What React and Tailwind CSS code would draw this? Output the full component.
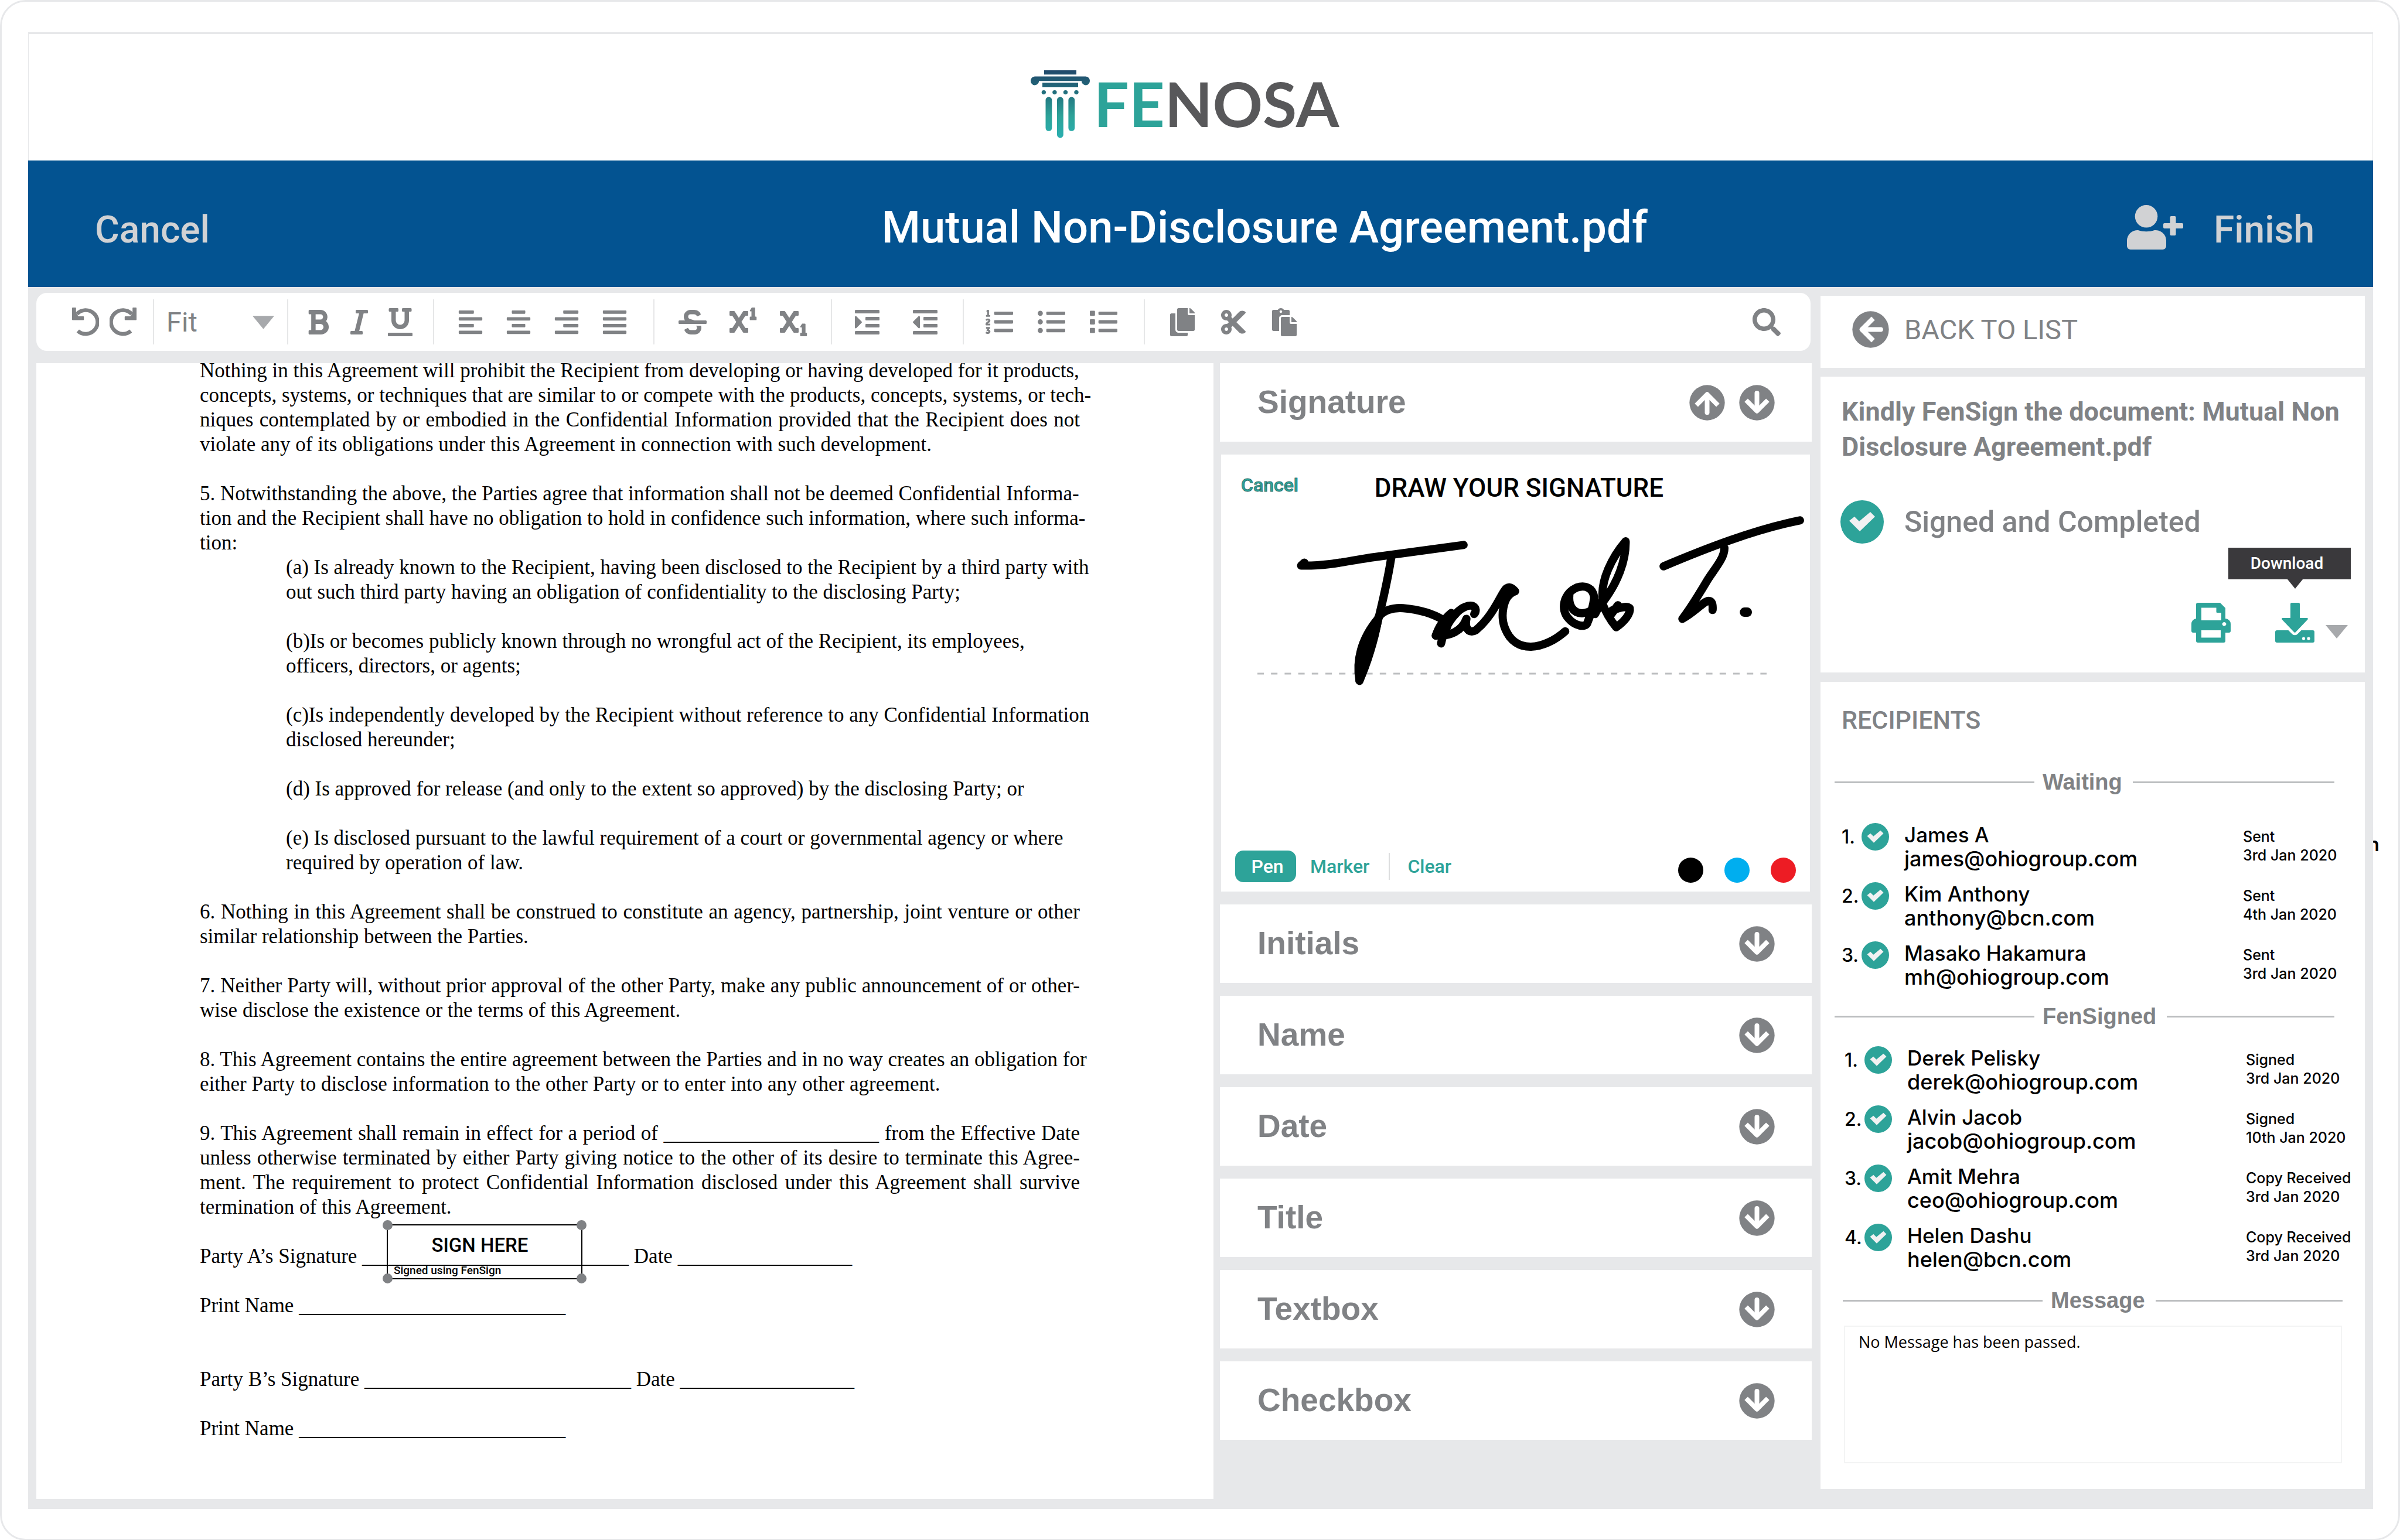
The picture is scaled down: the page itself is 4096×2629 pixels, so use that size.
import React from "react";
import {
  FaBold, FaItalic, FaUnderline, FaAlignLeft, FaAlignCenter, FaAlignRight, FaAlignJustify,
  FaStrikethrough, FaIndent, FaOutdent, FaListOl, FaListUl, FaList, FaCopy, FaCut, FaPaste, FaSearch,
} from "react-icons/fa";

/* ---------- icons ---------- */

function Logo() {
  return (
    <svg viewBox="0 0 101 116" className="h-[116px] w-[101px]" aria-hidden="true">
      <defs>
        <linearGradient id="pillar" x1="0" y1="0" x2="0" y2="116" gradientUnits="userSpaceOnUse">
          <stop offset="0" stopColor="#21496b" />
          <stop offset="0.35" stopColor="#22737f" />
          <stop offset="0.68" stopColor="#2da399" />
          <stop offset="1" stopColor="#2aafb0" />
        </linearGradient>
      </defs>
      <g fill="url(#pillar)">
        <path d="M23 0h55v7.2H23zM20 21.2h61v7.8H20z" />
        <path d="M7 10.4H94a7.3 7.5 0 0 1 7 7.6a7.1 7.3 0 0 1-14.2 0.2H14.2A7.1 7.3 0 0 1 0 18A7.3 7.5 0 0 1 7 10.4z" />
        <circle cx="22.3" cy="37.6" r="3.7" />
        <circle cx="40.9" cy="37.6" r="3.7" />
        <circle cx="59.5" cy="37.6" r="3.7" />
        <circle cx="78" cy="37.6" r="3.7" />
        <rect x="25.5" y="45.4" width="10.8" height="58.4" rx="5.4" />
        <rect x="45" y="45.4" width="10.8" height="70" rx="5.4" />
        <rect x="64.4" y="45.4" width="10.8" height="58.4" rx="5.4" />
      </g>
    </svg>
  );
}

function UserPlus() {
  return (
    <svg viewBox="0 0 96 76" className="h-[76px] w-[96px]" fill="#d1d2d4" aria-hidden="true">
      <circle cx="33" cy="19.3" r="19.3" />
      <path d="M0 60a18 18 0 0 1 19-17c9 3 19 3 28 0a18 18 0 0 1 20 17v10a6 6 0 0 1-6 6H6a6 6 0 0 1-6-6z" />
      <path d="M73.500 21a2 2 0 0 1 2-2h6a2 2 0 0 1 2 2v10h10.500a2 2 0 0 1 2 2v5a2 2 0 0 1-2 2H83.500v10a2 2 0 0 1-2 2h-6a2 2 0 0 1-2-2V40H64a2 2 0 0 1-2-2v-5a2 2 0 0 1 2-2h9.500z" />
    </svg>
  );
}

function UndoIcon() {
  return (
    <svg viewBox="0 0 46 49" className="h-[49px] w-[46px]" aria-hidden="true">
      <path d="M8.300 11A20.300 20.300 0 1 1 9.800 40" fill="none" stroke="currentColor" strokeWidth="6.600" />
      <path d="M0 1a1 1 0 0 1 1-1h4.800a1 1 0 0 1 1 1v8l4 6h8.400a1 1 0 0 1 1 1v4.600a1 1 0 0 1-1 1H1a1 1 0 0 1-1-1z" fill="currentColor" />
    </svg>
  );
}

function RedoIcon() {
  return (
    <svg viewBox="0 0 46 49" className="h-[49px] w-[46px]" aria-hidden="true">
      <g transform="translate(46 0) scale(-1 1)">
        <path d="M8.300 11A20.300 20.300 0 1 1 9.800 40" fill="none" stroke="currentColor" strokeWidth="6.600" />
        <path d="M0 1a1 1 0 0 1 1-1h4.800a1 1 0 0 1 1 1v8l4 6h8.400a1 1 0 0 1 1 1v4.600a1 1 0 0 1-1 1H1a1 1 0 0 1-1-1z" fill="currentColor" />
      </g>
    </svg>
  );
}

function ScriptIcon({ low }) {
  return (
    <svg viewBox="0 0 47 49" className="h-[49px] w-[47px]" fill="currentColor" aria-hidden="true">
      <path d="M6 9L26 40M26 9L6 40" stroke="currentColor" strokeWidth="7.500" />
      <rect x="0" y="6" width="9" height="8" rx="1.200" />
      <rect x="23" y="6" width="9" height="8" rx="1.200" />
      <rect x="0" y="35" width="9" height="8" rx="1.200" />
      <rect x="23" y="35" width="9" height="8" rx="1.200" />
      <g transform={low ? "translate(0 27.400)" : undefined}>
        <path d="M38 0h4.500a1.200 1.200 0 0 1 1.200 1.200V15.500H45a1.200 1.200 0 0 1 1.200 1.200v3.700a1.200 1.200 0 0 1-1.200 1.200h-9.200a1.200 1.200 0 0 1-1.200-1.200v-3.700a1.200 1.200 0 0 1 1.200-1.200h1.700V6.500H36a1.200 1.200 0 0 1-1.200-1.600z" />
      </g>
    </svg>
  );
}

function Caret({ className }) {
  return (
    <svg viewBox="0 0 38 23" className={className} fill="#a7a9ac" aria-hidden="true">
      <path d="M0 0h38L19 23z" />
    </svg>
  );
}

function ArrowCircle({ dir = "down", className = "h-[61px] w-[61px]" }) {
  const turn = { down: 0, left: 90, up: 180 }[dir];
  return (
    <svg viewBox="0 0 88 88" className={className} aria-hidden="true">
      <circle cx="44" cy="44" r="43.500" fill="#808285" />
      <g transform={`rotate(${turn} 44 44)`} fill="none" stroke="#fff" strokeWidth="11.500" strokeLinejoin="round">
        <path d="M44 20V62" strokeLinecap="round" />
        <path d="M21.500 42L44 64.500L66.500 42" strokeLinecap="square" />
      </g>
    </svg>
  );
}

function CheckCircle({ className }) {
  return (
    <svg viewBox="-37 -37 74 74" className={className} aria-hidden="true">
      <circle r="37" fill="#2da399" />
      <path d="M-22-2L-13-9L-5-1L14-17L22-9L-4 16z" fill="#f1f1f2" />
    </svg>
  );
}

function PrintIcon() {
  return (
    <svg viewBox="0 0 67 68" className="h-[68px] w-[67px]" aria-hidden="true">
      <path
        fill="#2da399"
        fillRule="evenodd"
        d="M11 0H49L58 9V27a9 9 0 0 1 9 9v12a3 3 0 0 1-3 3H58V65a3 3 0 0 1-3 3H11a3 3 0 0 1-3-3V51H3a3 3 0 0 1-3-3V36a9 9 0 0 1 8-9V3a3 3 0 0 1 3-3zM17 8.500V30H51V17H44a1.500 1.500 0 0 1-1.500-1.500V8.500zM17 47V59.500H50V47zM56 33a3.400 3.400 0 1 0 .01 0z"
      />
    </svg>
  );
}

function DownloadIcon() {
  return (
    <svg viewBox="0 0 67 68" className="h-[68px] w-[67px]" fill="#2da399" aria-hidden="true">
      <path d="M28 0H40a2 2 0 0 1 2 2V26H54.500a1.500 1.500 0 0 1 1 2.500L35 50a2 2 0 0 1-3 0L11.500 28.500a1.500 1.500 0 0 1 1-2.500H26V2a2 2 0 0 1 2-2z" />
      <path
        fillRule="evenodd"
        d="M3 47H22.500L29 53.500a6.400 6.400 0 0 0 9 0L44.500 47H64a3 3 0 0 1 3 3V65a3 3 0 0 1-3 3H3a3 3 0 0 1-3-3V50a3 3 0 0 1 3-3zM48.500 58.500a2.700 2.700 0 1 0 .01 0zM57 58.500a2.700 2.700 0 1 0 .01 0z"
      />
    </svg>
  );
}

/* ---------- toolbar ---------- */

function Tool({ label, children }) {
  return (
    <button type="button" aria-label={label} className="flex h-[49px] w-[48px] items-center justify-center">
      {children}
    </button>
  );
}

const GROUP = "flex h-[77px] items-center border-l-2 border-[#e6e7e8]";

function Toolbar() {
  return (
    <div role="toolbar" aria-label="Formatting" className="mr-[2px] flex h-[99px] items-center rounded-[18px] bg-white pl-[60px] pr-[51px] text-[#808285]">
      <div className="flex gap-[16px] pr-[27px]">
        <Tool label="Undo"><UndoIcon /></Tool>
        <Tool label="Redo"><RedoIcon /></Tool>
      </div>
      <div className={`${GROUP} w-[229px] pl-[21px]`}>
        <div className="relative w-[184px]">
          <select aria-label="Zoom" className="w-full appearance-none bg-transparent font-['Roboto',sans-serif] text-[47px] leading-[60px]">
            <option>Fit</option>
          </select>
          <Caret className="pointer-events-none absolute top-[19px] right-0 h-[23px] w-[37px]" />
        </div>
      </div>
      <div className={`${GROUP} gap-[22px] pr-[32px] pl-[27px]`}>
        <Tool label="Bold"><FaBold size={48} /></Tool>
        <Tool label="Italic"><FaItalic size={48} /></Tool>
        <Tool label="Underline"><FaUnderline size={48} /></Tool>
      </div>
      <div className={`${GROUP} gap-[34px] pr-[42px] pl-[38px]`}>
        <Tool label="Align left"><FaAlignLeft size={46} /></Tool>
        <Tool label="Align center"><FaAlignCenter size={46} /></Tool>
        <Tool label="Align right"><FaAlignRight size={46} /></Tool>
        <Tool label="Justify"><FaAlignJustify size={46} /></Tool>
      </div>
      <div className={`${GROUP} gap-[38px] pr-[40px] pl-[41px]`}>
        <Tool label="Strikethrough"><FaStrikethrough size={48} /></Tool>
        <Tool label="Superscript"><ScriptIcon /></Tool>
        <Tool label="Subscript"><ScriptIcon low /></Tool>
      </div>
      <div className={`${GROUP} gap-[51px] pr-[40px] pl-[36px]`}>
        <Tool label="Indent"><FaIndent size={48} /></Tool>
        <Tool label="Outdent"><FaOutdent size={48} /></Tool>
      </div>
      <div className={`${GROUP} gap-[41px] pr-[45px] pl-[36px]`}>
        <Tool label="Numbered list"><FaListOl size={47} /></Tool>
        <Tool label="Bulleted list"><FaListUl size={47} /></Tool>
        <Tool label="Square list"><FaList size={47} /></Tool>
      </div>
      <div className={`${GROUP} gap-[39px] pl-[40px]`}>
        <Tool label="Copy"><FaCopy size={48} /></Tool>
        <Tool label="Cut"><FaCut size={48} /></Tool>
        <Tool label="Paste"><FaPaste size={48} /></Tool>
      </div>
      <div className="ml-auto">
        <Tool label="Search"><FaSearch size={48} /></Tool>
      </div>
    </div>
  );
}

/* ---------- document ---------- */

const J = true;
const PARAGRAPHS = [
  { lines: [
    ["Nothing in this Agreement will prohibit the Recipient from developing or having developed for it products,"],
    ["concepts, systems, or techniques that are similar to or compete with the products, concepts, systems, or tech-"],
    ["niques contemplated by or embodied in the Confidential Information provided that the Recipient does not", J],
    ["violate any of its obligations under this Agreement in connection with such development."],
  ], space: true },
  { lines: [
    ["5. Notwithstanding the above, the Parties agree that information shall not be deemed Confidential Informa-"],
    ["tion and the Recipient shall have no obligation to hold in confidence such information, where such informa-"],
    ["tion:"],
  ] },
  { indent: true, lines: [
    ["(a) Is already known to the Recipient, having been disclosed to the Recipient by a third party with"],
    ["out such third party having an obligation of confidentiality to the disclosing Party;"],
  ], space: true },
  { indent: true, lines: [
    ["(b)Is or becomes publicly known through no wrongful act of the Recipient, its employees,"],
    ["officers, directors, or agents;"],
  ], space: true },
  { indent: true, lines: [
    ["(c)Is independently developed by the Recipient without reference to any Confidential Information"],
    ["disclosed hereunder;"],
  ], space: true },
  { indent: true, lines: [["(d) Is approved for release (and only to the extent so approved) by the disclosing Party; or"]], space: true },
  { indent: true, lines: [
    ["(e) Is disclosed pursuant to the lawful requirement of a court or governmental agency or where"],
    ["required by operation of law."],
  ], space: true },
  { lines: [
    ["6. Nothing in this Agreement shall be construed to constitute an agency, partnership, joint venture or other", J],
    ["similar relationship between the Parties."],
  ], space: true },
  { lines: [
    ["7. Neither Party will, without prior approval of the other Party, make any public announcement of or other-", J],
    ["wise disclose the existence or the terms of this Agreement."],
  ], space: true },
  { lines: [
    ["8. This Agreement contains the entire agreement between the Parties and in no way creates an obligation for"],
    ["either Party to disclose information to the other Party or to enter into any other agreement."],
  ], space: true },
  { lines: [
    ["9. This Agreement shall remain in effect for a period of _____________________ from the Effective Date", J],
    ["unless otherwise terminated by either Party giving notice to the other of its desire to terminate this Agree-", J],
    ["ment. The requirement to protect Confidential Information disclosed under this Agreement shall survive", J],
    ["termination of this Agreement."],
  ] },
];

function SignHere() {
  const dot = "absolute h-[17px] w-[17px] rounded-full bg-[#808285]";
  return (
    <button type="button" className="absolute -top-[34px] left-[319px] flex h-[94px] w-[334px] flex-col border-2 border-black text-left font-['Roboto',sans-serif] font-medium">
      <span className="mt-[14px] self-center pr-[16px] text-[33px] leading-[40px]">SIGN HERE</span>
      <span className="mt-[12px] ml-[10px] text-[19px] leading-[22px]">Signed using FenSign</span>
      <span className={`${dot} -top-[9px] -left-[9px]`} />
      <span className={`${dot} -top-[9px] -right-[9px]`} />
      <span className={`${dot} -bottom-[9px] -left-[9px]`} />
      <span className={`${dot} -right-[9px] -bottom-[9px]`} />
    </button>
  );
}

function Document() {
  return (
    <article className="overflow-hidden bg-white">
      <div className="-mt-[8px] ml-[279px] max-w-[1502px] font-['Liberation_Serif',serif] text-[35px] leading-[42px] whitespace-nowrap text-black">
        {PARAGRAPHS.map((p, i) => (
          <p key={i} className={`${p.indent ? "pl-[147px]" : ""} ${p.space ? "mb-[42px]" : ""}`}>
            {p.lines.map(([text, justified]) => (
              <span key={text} className={justified ? "block text-justify whitespace-normal [text-align-last:justify]" : "block"}>
                {text}
              </span>
            ))}
          </p>
        ))}
        <div className="relative mt-[42px]">
          <p>Party A’s Signature __________________________ Date _________________</p>
          <SignHere />
        </div>
        <p className="mt-[42px]">Print Name __________________________</p>
        <p className="mt-[84px]">Party B’s Signature __________________________ Date _________________</p>
        <p className="mt-[42px]">Print Name __________________________</p>
      </div>
    </article>
  );
}

/* ---------- field panels ---------- */

function Panel({ title, up }) {
  return (
    <section className="flex h-[134px] items-center justify-between bg-white pr-[63px] pl-[64px]">
      <h2 className="pb-[2px] font-['Liberation_Sans',sans-serif] text-[55px] leading-[64px] font-bold text-[#808285]">{title}</h2>
      <div className="flex gap-[24px]">
        {up && <button type="button" aria-label={`Collapse ${title}`}><ArrowCircle dir="up" /></button>}
        <button type="button" aria-label={`Expand ${title}`}><ArrowCircle /></button>
      </div>
    </section>
  );
}

function Signature() {
  const line = { vectorEffect: "non-scaling-stroke" };
  return (
    <svg viewBox="0 0 1005 570" className="mt-[12px] w-full" role="img" aria-label="Drawn signature">
      <path d="M62 282H931" stroke="#bcbec0" strokeWidth="3" strokeDasharray="11 12.200" />
      <g transform="translate(-44.600 -283.800) scale(0.6967 0.6271)" fill="none" stroke="#000" strokeWidth="14" strokeLinecap="round" strokeLinejoin="round">
        <path {...line} d="M268 600L260 608C330 610 390 592 440 585C515 573 590 563 658 552" />
        <path {...line} d="M481 585C472 650 460 705 449 755C436 820 420 870 403 922" />
        <path {...line} fill="#000" d="M403 920C395 870 405 810 449 752C440 810 420 880 403 920z" />
        <path {...line} d="M449 750C460 730 485 722 510 724C550 728 585 740 608 756" />
        <path {...line} d="M603 820C610 780 625 755 640 738C655 720 672 715 680 718C690 723 689 733 684 740" />
        <path {...line} fill="#000" d="M590 799C596 778 608 756 628 737L612 794z" />
        <path {...line} d="M590 798C625 802 655 785 665 753C660 780 672 794 688 784C725 750 742 705 756 680C765 662 775 665 784 678" />
        <path {...line} d="M784 678C752 690 748 750 760 780C785 850 855 838 907 787" />
        <path {...line} d="M978 696C976 668 955 660 935 668C902 685 895 728 915 752C930 772 955 778 961 765C972 735 976 715 978 696" />
        <path {...line} d="M917 690C915 715 925 737 948 738C970 736 985 722 1003 700" />
        <path {...line} d="M1055 542C1025 580 990 650 1000 706C1035 655 1056 595 1055 542z" />
        <path {...line} d="M996 706C1006 735 1020 760 1032 776C1050 762 1068 740 1065 724C1055 716 1040 724 1022 730M1036 716L1020 740" />
        <path {...line} d="M980 740L996 706" />
        <path {...line} d="M1148 610C1250 562 1370 510 1482 485" />
        <path {...line} d="M1297 560C1297 590 1270 620 1253 652C1230 695 1210 730 1194 753C1215 740 1228 726 1240 716C1256 700 1270 697 1268 729" />
        <path {...line} strokeWidth="16" d="M1346 735L1353 735" />
      </g>
    </svg>
  );
}

function Ink({ label, className, checked }) {
  return (
    <input type="radio" name="ink" aria-label={label} defaultChecked={checked} className={`h-[43px] w-[43px] appearance-none rounded-full ${className}`} />
  );
}

function DrawPanel() {
  return (
    <section className="mr-[3px] ml-[2px] flex flex-col bg-white pt-[34px] pb-[16px] font-['Roboto',sans-serif]">
      <div className="grid grid-cols-[1fr_auto_1fr] items-center px-[34px]">
        <button type="button" className="justify-self-start pb-[10px] text-[32px] leading-[36px] font-medium text-[#2da399] [-webkit-text-stroke:1px_#33716d]">
          Cancel
        </button>
        <h3 className="pl-[12px] text-[44px] leading-[44px] font-medium text-black">DRAW YOUR SIGNATURE</h3>
      </div>
      <Signature />
      <div className="mt-[14px] flex h-[54px] items-center pr-[24px] pl-[24px] text-[32px] font-medium text-[#2da399]">
        <button type="button" className="h-[54px] w-[104px] rounded-[14px] bg-[#2da399] pl-[6px] text-white">Pen</button>
        <button type="button" className="ml-[24px]">Marker</button>
        <span className="ml-[33px] h-[46px] border-l-2 border-[#dcddde]" />
        <button type="button" className="ml-[30px]">Clear</button>
        <div className="ml-auto flex gap-[36px] pt-[12px]">
          <Ink label="Black" checked className="bg-black" />
          <Ink label="Blue" className="bg-[#00aeef]" />
          <Ink label="Red" className="bg-[#ed1c24]" />
        </div>
      </div>
    </section>
  );
}

/* ---------- side column ---------- */

const WAITING = [
  ["James A", "james@ohiogroup.com", "Sent", "3rd Jan 2020"],
  ["Kim Anthony", "anthony@bcn.com", "Sent", "4th Jan 2020"],
  ["Masako Hakamura", "mh@ohiogroup.com", "Sent", "3rd Jan 2020"],
];
const SIGNED = [
  ["Derek Pelisky", "derek@ohiogroup.com", "Signed", "3rd Jan 2020"],
  ["Alvin Jacob", "jacob@ohiogroup.com", "Signed", "10th Jan 2020"],
  ["Amit Mehra", "ceo@ohiogroup.com", "Copy Received", "3rd Jan 2020"],
  ["Helen Dashu", "helen@bcn.com", "Copy Received", "3rd Jan 2020"],
];

function People({ rows, className }) {
  return (
    <ol className={`flex flex-col gap-[19px] font-['Inter',sans-serif] text-[35px] leading-[41px] font-medium text-black ${className}`}>
      {rows.map(([name, mail, state, date], i) => (
        <li key={mail} className="flex">
          <span className="w-[34px] pt-[3px] text-[32px] whitespace-nowrap">{i + 1}.</span>
          <CheckCircle className="h-[47px] w-[47px]" />
          <span className="ml-[26px] flex flex-col">
            <span>{name}</span>
            <span className="text-[36px]">{mail}</span>
          </span>
          <span className="ml-auto flex flex-col pt-[7px] text-[25px] leading-[32px]">
            <span>{state}</span>
            <span>{date}</span>
          </span>
        </li>
      ))}
    </ol>
  );
}

function Divider({ children, className }) {
  return (
    <div className={`flex items-center ${className}`}>
      <span className="h-[3px] w-[341px] bg-[#bcbec0]" />
      <h3 className="mr-[18px] ml-[14px] font-['Liberation_Sans',sans-serif] text-[38px] leading-[46px] font-bold text-[#808285]">{children}</h3>
      <span className="h-[3px] flex-1 bg-[#bcbec0]" />
    </div>
  );
}

function SideColumn() {
  return (
    <aside className="flex flex-col pt-[5px] pb-[34px] pl-px font-['Roboto',sans-serif] text-[#808285]">
      <div className="flex bg-white pt-[26px] pb-[34px] pl-[54px]">
        <a href="#list" className="flex items-center gap-[26px] text-[47px] leading-[60px]">
          <ArrowCircle dir="left" className="h-[63px] w-[63px]" />
          BACK TO LIST
        </a>
      </div>
      <section className="mt-[15px] bg-white pt-[30px] pb-[51px]">
        <p className="pl-[36px] text-[45px] leading-[60px] font-bold">
          Kindly FenSign the document: Mutual Non
          <br />
          Disclosure Agreement.pdf
        </p>
        <p className="mt-[61px] flex items-center gap-[35px] pl-[34px] text-[50px] leading-[60px] font-medium">
          <CheckCircle className="h-[74px] w-[74px]" />
          Signed and Completed
        </p>
        <div className="mt-[101px] flex items-start justify-end pr-[29px]">
          <button type="button" aria-label="Print"><PrintIcon /></button>
          <button type="button" aria-label="Download" className="relative ml-[76px]">
            <DownloadIcon />
            <span role="tooltip" className="absolute bottom-[108px] left-1/2 -ml-[114px] flex h-[54px] w-[209px] items-center justify-center bg-[#3a393c] pr-[8px] text-[28px] font-medium text-white">
              Download
              <svg viewBox="0 0 26 16" className="absolute top-full left-[101px] h-[16px] w-[26px]" fill="#3a393c" aria-hidden="true">
                <path d="M0 0h26L13 16z" />
              </svg>
            </span>
          </button>
          <button type="button" aria-label="Download options" className="ml-[19px] pt-[38px]">
            <Caret className="h-[23px] w-[38px]" />
          </button>
        </div>
      </section>
      <section className="mt-[16px] flex-1 bg-white pt-[35px] pb-[44px]">
        <h2 className="pl-[36px] text-[43px] leading-[60px] font-medium">RECIPIENTS</h2>
        <Divider className="mt-[53px] pr-[52px] pl-[24px]">Waiting</Divider>
        <People rows={WAITING} className="mt-[47px] pl-[36px] [&>li>span:last-child]:w-[208px]" />
        <Divider className="mt-[23px] pr-[52px] pl-[24px]">FenSigned</Divider>
        <People rows={SIGNED} className="mt-[28px] pl-[41px] [&>li>span:last-child]:w-[203px]" />
        <Divider className="mt-[26px] pr-[38px] pl-[38px]">Message</Divider>
        <div className="mt-[20px] pr-[39px] pl-[40px]">
          <textarea
            aria-label="Message"
            defaultValue="No Message has been passed."
            className="block h-[235px] w-full resize-none border-2 border-[#f3f4f4] px-[23px] py-[8px] font-['Open_Sans',sans-serif] text-[27px] leading-[36px] text-black"
          />
        </div>
      </section>
    </aside>
  );
}

/* ---------- page ---------- */

export default function App() {
  return (
    <div className="min-h-screen bg-white">
      <div className="relative flex min-h-screen flex-col rounded-[44px] border-3 border-[#e7e8ea] pt-[52px] pr-[43px] pb-[51px] pl-[45px]">
        <header className="flex h-[219px] items-center justify-center border-x border-t-3 border-[#e7e8ea] pt-[23px] pr-[54px]">
          <div className="flex gap-[7px]">
            <Logo />
            <p className="pt-[4px] font-['Lato',sans-serif] text-[106px] leading-[105px] font-bold text-[#58585a]">
              <span className="text-[#2da399]">FE</span>NOSA
            </p>
          </div>
        </header>
        <div className="grid h-[216px] grid-cols-[1461fr_auto_1242fr] items-center bg-[#035391] pt-[12px] font-['Roboto',sans-serif] text-[64px] leading-[75px] font-medium text-[#d1d2d4]">
          <button type="button" className="justify-self-start pt-[8px] pl-[114px]">Cancel</button>
          <h1 className="text-[76px] text-white">Mutual Non-Disclosure Agreement.pdf</h1>
          <div className="flex items-center justify-end gap-[52px] pr-[100px]">
            <button type="button" aria-label="Add person"><UserPlus /></button>
            <button type="button" className="pt-[8px]">Finish</button>
          </div>
        </div>
        <div className="grid flex-1 grid-cols-[3030fr_930fr] gap-[14px] bg-[#e7e8ea] px-[14px] pt-[10px]">
          <div className="flex min-w-0 flex-col gap-[21px] pb-[17px]">
            <Toolbar />
            <main className="grid flex-1 grid-cols-[2009fr_1010fr] gap-[11px]">
              <Document />
              <div className="flex flex-col gap-[22px]">
                <Panel title="Signature" up />
                <DrawPanel />
                {["Initials", "Name", "Date", "Title", "Textbox", "Checkbox"].map((t) => (
                  <Panel key={t} title={t} />
                ))}
              </div>
            </main>
          </div>
          <SideColumn />
        </div>
        <span className="absolute top-[1418px] right-[32px] flex w-[11px] justify-end overflow-hidden font-['Inter',sans-serif] text-[33px] leading-[40px] font-semibold text-black">n</span>
      </div>
    </div>
  );
}
